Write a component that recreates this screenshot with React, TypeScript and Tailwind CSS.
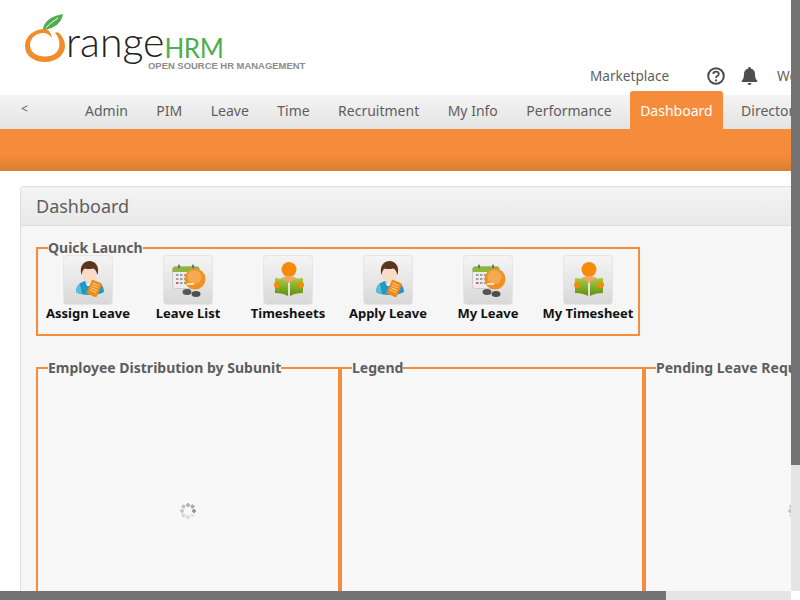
import React from "react";

function Person() {
  return (
    <svg width="28" height="36" viewBox="0 0 28 36" className="ml-[3px] -mt-[2px]">
      <path d="M0 31c0-7 5-10 9-11l5 3 5-3c4 1 9 4 9 11-3 2-8 3-14 3S3 33 0 31z" fill="#2398c2" />
      <path d="M0 31c0-4 2-7 4-8l2 10c-3 0-5-1-6-2z" fill="#56c0dd" />
      <path d="M9 20c2 3 8 3 10 0l-2 5h-6z" fill="#f2f2f2" />
      <ellipse cx="13.500" cy="12" rx="7.500" ry="9.500" fill="#f8dcc6" />
      <path d="M5.500 14C3 5 8 0 13.500 0S24 5 21.500 14c-1-3-2-6-4.500-6.500-3 .8-6 .8-8 0C6.500 8.500 6.500 11 5.500 14z" fill="#5a3621" />
      <g transform="rotate(24 18 28)">
        <rect x="12.500" y="20" width="11" height="15" rx="1" fill="#ef8a1a" />
        <path d="M14.500 23h7M14.500 25.500h7M14.500 28h7M14.500 30.500h7" stroke="#fbcf8c" strokeWidth="1" />
      </g>
    </svg>
  );
}

function Calendar() {
  return (
    <svg width="34" height="33" viewBox="0 0 34 33" className="ml-[1px]">
      <rect x="0.500" y="2.500" width="27" height="22" rx="3" fill="#ededed" stroke="#c4c4c4" strokeWidth="0.8" />
      <path d="M0.500 8V5.500a3 3 0 0 1 3-3h21a3 3 0 0 1 3 3V8z" fill="#8fb63c" />
      <rect x="6" y="0.500" width="2" height="4" rx="1" fill="#6d6d6d" />
      <rect x="20" y="0.500" width="2" height="4" rx="1" fill="#6d6d6d" />
      <path d="M4 11h2.500M8 11h2.500M12 11h2.500M16 11h2.500M8 15h2.500M12 15h2.500M8 19h2.500M12 19h2.500" stroke="#9e9e9e" strokeWidth="1.800" />
      <path d="M4 15h2.500" stroke="#9e9e9e" strokeWidth="1.800" />
      <path d="M4 19h2.500" stroke="#d9534f" strokeWidth="1.800" />
      <ellipse cx="15" cy="28" rx="4.500" ry="3" fill="#555" />
      <ellipse cx="24" cy="30" rx="4.500" ry="3" fill="#4d4d4d" />
      <circle cx="23" cy="15" r="10.500" fill="#ee9224" />
      <circle cx="22.500" cy="13" r="7" fill="#f5aa52" />
      <path d="M15 20h7" stroke="#fff" strokeWidth="1.400" />
    </svg>
  );
}

function Reader({ id }: { id: string }) {
  return (
    <svg width="30" height="34" viewBox="0 0 30 34" className="ml-[1px] -mt-[2px]">
      <defs>
        <linearGradient id={id} x1="0" y1="0" x2="0" y2="1">
          <stop offset="0" stopColor="#a8cc46" />
          <stop offset="1" stopColor="#5f8f0a" />
        </linearGradient>
      </defs>
      <circle cx="15" cy="7.500" r="7.500" fill="#f58a0b" />
      <path d="M6 18c2-3 5-4 9-4s7 1 9 4l-9 3z" fill="#f3a468" />
      <path d="M1 16c5 0 10 1 13 4v14c-3-2-8-3-13-3z" fill={`url(#${id})`} />
      <path d="M29 16c-5 0-10 1-13 4v14c3-2 8-3 13-3z" fill={`url(#${id})`} />
      <circle cx="3" cy="23" r="3" fill="#f58a0b" />
      <circle cx="27" cy="23" r="3" fill="#f58a0b" />
    </svg>
  );
}

function Spinner() {
  const dots = [
    [8, 2, "#b5b5b5"],
    [12.500, 3.500, "#a8a8a8"],
    [14, 8, "#9a9a9a"],
    [12.500, 12.500, "#e4e4e4"],
    [8, 14, "#dadada"],
    [3.500, 12.500, "#d2d2d2"],
    [2, 8, "#c8c8c8"],
    [3.500, 3.500, "#bebebe"],
  ] as const;
  return (
    <svg width="16" height="16" viewBox="0 0 16 16">
      {dots.map(([x, y, c], i) => (
        <path key={i} d={`M${x - 2} ${y}h4M${x} ${y - 2}v4`} stroke={c} strokeWidth="2" />
      ))}
    </svg>
  );
}

function Launch({ label, icon }: { label: string; icon: React.ReactNode }) {
  return (
    <div className="w-[100px] flex flex-col items-center">
      <div className="w-[50px] h-[50px] rounded-[4px] border border-[#e6e6e2] bg-gradient-to-b from-[#f5f5f5] to-[#d8d8d8] flex items-center justify-center">
        {icon}
      </div>
      <div className="-mt-[1px] text-[13px] leading-[18px] font-bold text-[#111] whitespace-nowrap">{label}</div>
    </div>
  );
}

function Chart({ title, spinner }: { title: string; spinner?: boolean }) {
  return (
    <fieldset className="w-[304px] h-[300px] shrink-0 border-2 border-[#f58c3b] px-[10px] bg-[#f8f8f8] min-w-0">
      <legend className="text-[14px] leading-[19px] font-bold text-[#5e5e5e] whitespace-nowrap">{title}</legend>
      {spinner && (
        <div className="flex justify-center pt-[126px]">
          <Spinner />
        </div>
      )}
    </fieldset>
  );
}

const nav = ["Admin", "PIM", "Leave", "Time", "Recruitment", "My Info", "Performance", "Dashboard", "Directory"];

export default function App() {
  return (
    <div className="relative h-screen w-screen overflow-hidden bg-white" style={{ fontFamily: '"Noto Sans", sans-serif' }}>
      <div className="w-[940px] h-[751px]">
        <header className="h-[95px] flex pl-[25px] pt-[14px]">
          <div className="w-[280px] shrink-0 flex items-start">
            <svg width="42" height="50" viewBox="0 0 42 50" className="shrink-0">
              <path d="M18 16C18 8 26 2 38 0 37 8 30 15 18 16z" fill="#4fae4e" />
              <path d="M21 14C25 9 29 7 33 4" stroke="#fff" strokeWidth="1" fill="none" />
              <path
                fillRule="evenodd"
                d="M20 15C9 15 0 22 0 32s9 16 20 16 20-7 20-16c0-5-2-9-6-13-1-1-3-1-4 0 3 3 4.500 7 4.500 11 0 8-6 12.500-14.500 12.500S5 38 5 31C5 24 11 19 18 19c4 0 7 2 9 5-1-5-3-9-7-9z"
                fill="#f48b2b"
              />
            </svg>
            <div className="flex flex-col -ml-[1px] pt-[5px]">
              <div className="flex items-end h-[41px]">
                <span className="text-[41px] leading-[36px] text-[#222]" style={{ fontFamily: "Lato, sans-serif", fontWeight: 300 }}>
                  range
                </span>
                <span className="text-[26px] leading-[24px] tracking-[-0.5px] text-[#51ae4f]" style={{ fontFamily: "Lato, sans-serif" }}>
                  HRM
                </span>
              </div>
              <div className="ml-[82px] text-[9.45px] leading-[12px] font-bold text-[#8c8c8c] whitespace-nowrap" style={{ fontFamily: '"Liberation Sans", sans-serif' }}>
                OPEN SOURCE HR MANAGEMENT
              </div>
            </div>
          </div>
          <div className="ml-[285px] mt-[50px] h-[24px] flex items-center text-[13.6px] text-[#5e5e5e] whitespace-nowrap">
            <span>Marketplace</span>
            <svg width="18" height="18" viewBox="0 0 18 18" className="ml-[38px]">
              <circle cx="9" cy="9" r="7.800" fill="none" stroke="#4d4d4d" strokeWidth="2" />
              <path d="M6.300 7c0-1.600 1.200-2.400 2.700-2.400s2.800.8 2.800 2.300c0 2.200-2.800 2-2.800 4" fill="none" stroke="#4d4d4d" strokeWidth="1.800" />
              <circle cx="9" cy="13.400" r="1.100" fill="#4d4d4d" />
            </svg>
            <svg width="17" height="18" viewBox="0 0 16 18" className="ml-[16px]">
              <path d="M8 0a1.300 1.300 0 0 1 1.300 1.500C12 2.100 13.500 4.300 13.500 7c0 4 1 5.500 2.300 6.800.3.4.1 1.200-.6 1.200H.8c-.7 0-.9-.8-.6-1.200C1.500 12.500 2.500 11 2.500 7c0-2.700 1.500-4.900 4.200-5.500A1.300 1.300 0 0 1 8 0z" fill="#4d4d4d" />
              <path d="M6 16h4a2 2 0 0 1-4 0z" fill="#4d4d4d" />
            </svg>
            <span className="ml-[19px]">Welcome Admin</span>
          </div>
        </header>
        <nav className="h-[34px] flex bg-gradient-to-b from-[#f4f4f4] to-[#e3e3e3] text-[14px] text-[#5e5e5e]">
          <div className="w-[75px] shrink-0 pl-[21px] pt-[5px] text-[12px] leading-[18px]">&lt;</div>
          <div className="flex gap-[8.45px]">
            {nav.map((n) =>
              n === "Dashboard" ? (
                <div key={n} className="h-[38px] -mt-[4px] px-[10px] leading-[40px] bg-[#f58c3b] text-white rounded-t-[3px]">
                  {n}
                </div>
              ) : (
                <div key={n} className="px-[10px] leading-[32px]">
                  {n}
                </div>
              )
            )}
          </div>
        </nav>
        <div className="h-[42px] bg-gradient-to-b from-[#f58c3b] from-60% to-[#d97e33]" />
        <main className="pl-[20px] pt-[15px]">
          <div className="w-[900px] h-[520px] overflow-hidden border border-[#dedede] rounded-t-[3px] bg-[#f6f6f6]">
            <div className="h-[39px] px-[15px] flex items-center text-[18px] text-[#5e5e5e] bg-gradient-to-b from-[#f4f4f4] to-[#e8e8e8] border-b border-[#dedede]">
              Dashboard
            </div>
            <div className="pl-[15px] pt-[12px]">
              <fieldset className="w-[604px] h-[98px] border-2 border-[#f58c3b] px-[10px] min-w-0">
                <legend className="text-[14px] leading-[19px] font-bold text-[#5e5e5e]">Quick Launch</legend>
                <div className="-mx-[10px] -mt-[2px] flex">
                  <Launch label="Assign Leave" icon={<Person />} />
                  <Launch label="Leave List" icon={<Calendar />} />
                  <Launch label="Timesheets" icon={<Reader id="bk1" />} />
                  <Launch label="Apply Leave" icon={<Person />} />
                  <Launch label="My Leave" icon={<Calendar />} />
                  <Launch label="My Timesheet" icon={<Reader id="bk2" />} />
                </div>
              </fieldset>
              <div className="mt-[22px] flex">
                <Chart title="Employee Distribution by Subunit" spinner />
                <Chart title="Legend" />
                <Chart title="Pending Leave Requests" spinner />
              </div>
            </div>
          </div>
        </main>
      </div>
      <div className="absolute right-0 top-0 w-[9px] h-[591px] bg-[#e5e5e5]">
        <div className="h-[465px] bg-[#737373]" />
      </div>
      <div className="absolute left-0 bottom-0 w-[791px] h-[9px] bg-[#e5e5e5]">
        <div className="w-[666px] h-full bg-[#737373]" />
      </div>
      <div className="absolute right-0 bottom-0 w-[9px] h-[9px] bg-white" />
    </div>
  );
}
